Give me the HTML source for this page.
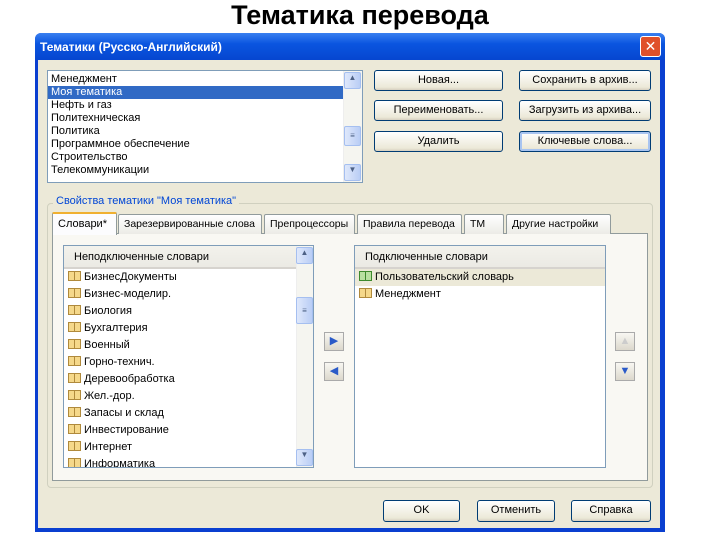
<!DOCTYPE html>
<html><head><meta charset="utf-8"><style>
*{box-sizing:border-box;margin:0;padding:0}
body{width:720px;height:540px;background:#fff;position:relative;overflow:hidden;font-family:"Liberation Sans","DejaVu Sans",sans-serif;font-size:11px;color:#000}
.a{position:absolute}
.h1{left:0;width:720px;top:-1px;text-align:center;font-size:27px;font-weight:bold;font-family:"Liberation Sans",sans-serif;line-height:32px}
.win{left:35px;top:33px;width:630px;height:499px;background:#0a3fd0;border-radius:6px 6px 0 0}
.tb{left:35px;top:33px;width:630px;height:27px;background:linear-gradient(#3a80f0,#0a55e0 40%,#0646d0);border-radius:6px 6px 0 0;color:#fff;font-weight:bold;font-size:12px;padding:7px 0 0 5px;font-family:"Liberation Sans",sans-serif}
.body{left:38px;top:60px;width:622px;height:468px;background:#ece9d8}
.box{background:#fff;border:1px solid #7f9db9}
.btn{background:linear-gradient(#fff,#ece9d8 85%,#d6d0c0);border:1px solid #003c74;border-radius:3px;text-align:center;line-height:19px}
.it{height:13px;line-height:13px;padding-left:3px;white-space:nowrap}
.sel{background:#316ac5;color:#fff}
.sb{background:#f5f5f0;border-left:1px solid #eee}
.sbb{background:linear-gradient(90deg,#dfe8fb,#b9cdf5);border:1px solid #a5bff0;border-radius:2px;color:#4d6185;font-size:8px;text-align:center}
.tab{top:214px;height:20px;border:1px solid #919b9c;border-bottom:none;background:linear-gradient(#fff,#ecebe6);line-height:18px;padding-left:5px;border-radius:2px 2px 0 0;white-space:nowrap;overflow:hidden;font-size:10.5px}
.li{height:17px;line-height:17px;white-space:nowrap;padding-left:4px}
.bk{display:inline-block;width:13px;height:10px;border:1px solid #b08a3c;background:#f5d88a;vertical-align:-1px;margin-right:3px;position:relative}
.bk:after{content:"";position:absolute;left:5px;top:0;width:1px;height:8px;background:#b08a3c}
.g{border-color:#3d8a2c;background:#b8e0a0}.g:after{background:#3d8a2c}
.hd{height:23px;line-height:23px;padding-left:10px;background:linear-gradient(#f3f2ec,#ebeae4);border-bottom:2px solid #d6d3ce}
.sq{width:20px;height:19px;background:linear-gradient(#f8f7f2,#dcd8cc);border:1px solid #aaa;text-align:center;line-height:17px;font-size:11px;color:#2a5ac8}
</style></head><body>
<div class="a h1">Тематика перевода</div>
<div class="a win"></div>
<div class="a tb">Тематики (Русско-Английский)</div>
<div class="a" style="left:640px;top:36px;width:21px;height:21px;background:#e0502a;border:1px solid #fff;border-radius:3px;color:#fff;font-weight:bold;text-align:center;line-height:19px;font-size:14px">✕</div>
<div class="a body"></div>

<div class="a box" style="left:47px;top:70px;width:316px;height:113px;padding-top:2px">
<div class="it">Менеджмент</div><div class="it sel" style="width:295px">Моя тематика</div><div class="it">Нефть и газ</div><div class="it">Политехническая</div><div class="it">Политика</div><div class="it">Программное обеспечение</div><div class="it">Строительство</div><div class="it">Телекоммуникации</div>
</div>
<div class="a sb" style="left:343px;top:71px;width:19px;height:111px"></div>
<div class="a sbb" style="left:344px;top:72px;width:17px;height:17px">▲</div>
<div class="a sbb" style="left:344px;top:126px;width:17px;height:20px;line-height:18px">≡</div>
<div class="a sbb" style="left:344px;top:164px;width:17px;height:17px">▼</div>

<div class="a btn" style="left:374px;top:70px;width:129px;height:21px">Новая...</div>
<div class="a btn" style="left:374px;top:100px;width:129px;height:21px">Переименовать...</div>
<div class="a btn" style="left:374px;top:131px;width:129px;height:21px">Удалить</div>
<div class="a btn" style="left:519px;top:70px;width:132px;height:21px">Сохранить в архив...</div>
<div class="a btn" style="left:519px;top:100px;width:132px;height:21px">Загрузить из архива...</div>
<div class="a btn" style="left:519px;top:131px;width:132px;height:21px;box-shadow:inset 0 0 0 2px #a8c4f0">Ключевые слова...</div>

<div class="a" style="left:47px;top:203px;width:606px;height:285px;border:1px solid #d0d0bf;border-radius:4px"></div>
<div class="a" style="left:53px;top:195px;background:#ece9d8;color:#0046d5;padding:0 3px">Свойства тематики "Моя тематика"</div>

<div class="a" style="left:52px;top:233px;width:596px;height:248px;border:1px solid #919b9c;background:#f9f8f3"></div>
<div class="a tab" style="left:118px;width:144px">Зарезервированные слова</div>
<div class="a tab" style="left:264px;width:91px">Препроцессоры</div>
<div class="a tab" style="left:357px;width:105px">Правила перевода</div>
<div class="a tab" style="left:464px;width:40px">TM</div>
<div class="a tab" style="left:506px;width:105px">Другие настройки</div>
<div class="a tab" style="left:52px;top:212px;width:65px;height:23px;background:#fcfcfe;border-top:2px solid #f0b030;padding-top:1px;font-size:11px">Словари*</div>

<div class="a box" style="left:63px;top:245px;width:251px;height:223px;overflow:hidden">
<div class="hd">Неподключенные словари</div>
<div class="li"><span class="bk"></span>БизнесДокументы</div><div class="li"><span class="bk"></span>Бизнес-моделир.</div><div class="li"><span class="bk"></span>Биология</div><div class="li"><span class="bk"></span>Бухгалтерия</div><div class="li"><span class="bk"></span>Военный</div><div class="li"><span class="bk"></span>Горно-технич.</div><div class="li"><span class="bk"></span>Деревообработка</div><div class="li"><span class="bk"></span>Жел.-дор.</div><div class="li"><span class="bk"></span>Запасы и склад</div><div class="li"><span class="bk"></span>Инвестирование</div><div class="li"><span class="bk"></span>Интернет</div><div class="li"><span class="bk"></span>Информатика</div>
</div>
<div class="a sb" style="left:296px;top:246px;width:17px;height:221px"></div>
<div class="a sbb" style="left:296px;top:247px;width:17px;height:17px">▲</div>
<div class="a sbb" style="left:296px;top:297px;width:17px;height:27px;line-height:25px">≡</div>
<div class="a sbb" style="left:296px;top:449px;width:17px;height:17px">▼</div>

<div class="a sq" style="left:324px;top:332px">▶</div>
<div class="a sq" style="left:324px;top:362px">◀</div>

<div class="a box" style="left:354px;top:245px;width:252px;height:223px">
<div class="hd">Подключенные словари</div>
<div class="li" style="background:#ece9d8"><span class="bk g"></span>Пользовательский словарь</div>
<div class="li"><span class="bk"></span>Менеджмент</div>
</div>
<div class="a sq" style="left:615px;top:332px;color:#ccc">▲</div>
<div class="a sq" style="left:615px;top:362px">▼</div>

<div class="a btn" style="left:383px;top:500px;width:77px;height:22px">OK</div>
<div class="a btn" style="left:477px;top:500px;width:78px;height:22px">Отменить</div>
<div class="a btn" style="left:571px;top:500px;width:80px;height:22px">Справка</div>
</body></html>
